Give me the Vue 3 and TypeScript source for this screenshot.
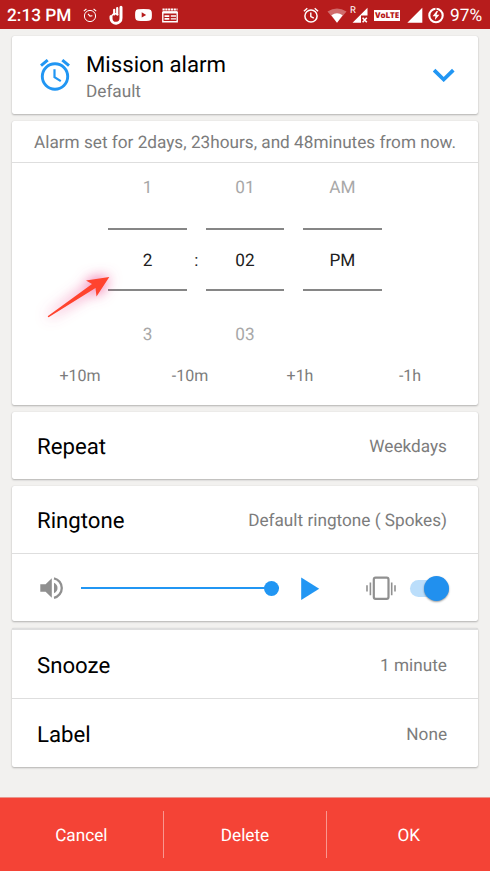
<script setup lang="ts">
interface PickerColumn {
  previous: string
  current: string
  next: string
}

const hours: PickerColumn = { previous: '1', current: '2', next: '3' }
const minutes: PickerColumn = { previous: '01', current: '02', next: '03' }
const period: PickerColumn = { previous: 'AM', current: 'PM', next: '' }
const columns: PickerColumn[] = [hours, minutes, period]
const adjustments: string[] = ['+10m', '-10m', '+1h', '-1h']
const actions: string[] = ['Cancel', 'Delete', 'OK']
</script>

<template>
  <div class="screen">
    <header class="status">
      <span class="clock">2:13 PM</span>
      <svg class="s-alarm-small" width="14" height="15" viewBox="0 0 14 15" fill="none" stroke="#fff">
        <circle cx="7" cy="8" r="5.6" stroke-width="1" />
        <path d="M.8 3.2 3.4 1M13.2 3.2 10.6 1M5 5.8l2 2.3 2.4-.3" stroke-width="1.1" />
      </svg>
      <svg class="s-hand" width="15" height="20" viewBox="0 0 15 20" fill="none" stroke="#fff" stroke-linecap="round">
        <path d="M12 2.2V13a5 5 0 0 1-10 .5V11.6" stroke-width="3" />
        <path d="M5.200 4.800V9.500M8.200 3.200v6.300" stroke-width="2.200" />
        <path d="M3 10.400c1.200-2 4.400-2.200 5.800-.6" stroke-width="1.400" />
      </svg>
      <svg class="s-video" width="17" height="12" viewBox="0 0 17 12">
        <path d="M3 .3Q8.5-.2 14 .3 16.4.5 16.7 2.8 17.1 6 16.7 9.2 16.4 11.5 14 11.7 8.500 12.200 3 11.700.600 11.500.300 9.200-.100 6 .300 2.800.600.500 3 .300Z" fill="#fff" />
        <path d="M6.700 3.300v5.200l4.500-2.600Z" fill="#b71c1c" />
      </svg>
      <svg class="s-news" width="16" height="15" viewBox="0 0 16 15" fill="none" stroke="#fff">
        <path d="M.500 1.500h15" stroke-width="1.800" stroke-dasharray="2.200 .600" />
        <path d="M.800 4v9.800h14.400V4" stroke-width="1.400" />
        <path d="M.500 4.300h15" stroke-width="2.400" />
        <path d="M8.800 8H14M8.800 10.800H14" stroke-width="1.300" />
        <path d="M2.500 8.100h4.800M2.500 10.800h4.800" stroke-width="1.700" />
      </svg>
      <span class="spacer"></span>
      <svg class="s-alarm" width="16" height="17" viewBox="0 0 16 17" fill="none" stroke="#fff">
        <circle cx="8" cy="9" r="6.100" stroke-width="1.500" />
        <path d="M.900 4.200 4.300 1.200M15.100 4.200 11.700 1.200M7.800 5.500v4l3 1.700" stroke-width="1.400" />
      </svg>
      <svg class="s-wifi" width="20" height="15" viewBox="0 0 20 15" fill="#fff">
        <path d="M.500 3.600Q10-2.600 19.500 3.600L10 14.800Z" opacity=".35" />
        <path d="M4.400 7.300Q10 3.400 15.600 7.300L10 14.800Z" />
      </svg>
      <span class="roaming">
        <svg width="16" height="16" viewBox="0 0 16 16">
          <path d="M.500 15.700 15.500.700V8.500H9v7.200Z" fill="#fff" />
          <path d="m10.600 10.700 4.200 4.500M14.800 10.700l-4.200 4.500" stroke="#fff" stroke-width="1.600" />
        </svg>
        <span class="r-mark">R</span>
      </span>
      <span class="volte">VoLTE</span>
      <svg class="s-signal" width="16" height="16" viewBox="0 0 16 16">
        <path d="M.300 15.700 15.300.700v15Z" fill="#fff" />
      </svg>
      <svg class="s-battery" width="16" height="17" viewBox="0 0 16 17">
        <circle cx="8" cy="8.500" r="6.700" fill="none" stroke="#fff" stroke-width="2.100" />
        <path d="M8 0v3" stroke="#b71c1c" stroke-width="1" />
        <path d="M8.600 4 4.600 9.200h2.800L6.900 13l4.500-5.300H8.500L10 4Z" fill="#fff" />
      </svg>
      <span class="percent">97%</span>
    </header>

    <main class="cards">
      <section class="card mission">
        <svg width="32" height="32" viewBox="0 0 32 32" fill="none" stroke="#2196f3">
          <circle cx="16" cy="17.500" r="12.700" stroke-width="2.900" />
          <path d="M2 6.700 8.700 1.100M30 6.700 23.300 1.100" stroke-width="3" />
          <path d="M15.500 10.300v7.800l6.300 4" stroke-width="2.200" />
        </svg>
        <div class="mission-text">
          <div class="title">Mission alarm</div>
          <div class="value">Default</div>
        </div>
        <svg width="22" height="14" viewBox="0 0 22 14" fill="none" stroke="#2196f3" stroke-width="3.700">
          <path d="m1.100 2.200 9.600 9.300 9.600-9.300" />
        </svg>
      </section>

      <section class="card time">
        <div class="summary">Alarm set for 2days, 23hours, and 48minutes from now.</div>
        <div class="picker">
          <template v-for="(column, index) in columns" :key="index">
            <div class="column">
              <span class="faded">{{ column.previous }}</span>
              <span class="current">{{ column.current }}</span>
              <span class="faded">{{ column.next }}</span>
            </div>
            <span v-if="index < 2" class="separator">{{ index === 0 ? ':' : '' }}</span>
          </template>
        </div>
        <div class="adjust">
          <span v-for="step in adjustments" :key="step">{{ step }}</span>
        </div>
        <svg class="pointer" width="100" height="80" viewBox="0 0 100 80">
          <path d="M80.300 19 57 22.500 63 26 19 58Q18.300 59.500 20 59L66.500 30 67.500 38.500Z" fill="#ff432e" />
        </svg>
      </section>

      <section class="card repeat">
        <div class="row">
          <span class="title">Repeat</span><span class="value">Weekdays</span>
        </div>
      </section>

      <section class="card ringtone">
        <div class="row">
          <span class="title">Ringtone</span><span class="value">Default ringtone ( Spokes)</span>
        </div>
        <div class="volume">
          <svg width="24" height="22" viewBox="0 0 24 22" fill="#909090">
            <path d="M.300 7.300h5.300L11.800 1.200v19.500L5.600 14.700H.300Z" />
            <path d="M14 5.800q3.500 1.700 3.500 5.300T14 16.300Z" />
            <path d="M14 1.300a10 10 0 0 1 0 19.500" fill="none" stroke="#909090" stroke-width="2.300" />
          </svg>
          <div class="slider"><span class="thumb"></span></div>
          <svg class="play" width="19" height="23" viewBox="0 0 19 23" fill="#2196f3"><path d="M.200.400v22.500L18.200 11.700Z" /></svg>
          <svg class="vibrate" width="30" height="24" viewBox="0 0 30 24" fill="none" stroke="#909090">
            <rect x="7.800" y="1.700" width="14.700" height="21.200" rx="1.800" stroke-width="2.200" />
            <path d="M1 9.200v6.300M4.400 6.400v12.900M25.700 6.400v12.900M29 9.200v6.300" stroke-width="1.600" />
          </svg>
          <div class="toggle"><span class="knob"></span></div>
        </div>
      </section>

      <section class="card extras">
        <div class="row">
          <span class="title">Snooze</span><span class="value">1 minute</span>
        </div>
        <div class="row label">
          <span class="title">Label</span><span class="value">None</span>
        </div>
      </section>
    </main>

    <footer class="actions">
      <button v-for="action in actions" :key="action" type="button"><span>{{ action }}</span></button>
    </footer>
  </div>
</template>

<style>
body {
  background: #f2f1ef;
}
</style>

<style scoped>
.screen {
  box-sizing: border-box;
  display: flex;
  flex-direction: column;
  width: 490px;
  height: 871px;
  overflow: hidden;
  background: #f2f1ef;
  color: #000;
  font-family: Roboto, sans-serif;
  text-rendering: geometricPrecision;
}
svg {
  display: block;
  flex: none;
}
.status {
  display: flex;
  align-items: center;
  box-sizing: border-box;
  height: 29px;
  padding: 1px 7px 0 7px;
  background: #b71c1c;
  color: #fff;
  flex: none;
}
.clock {
  width: 76px;
  padding-top: 2px;
  font-size: 17.300px;
  font-weight: 500;
  white-space: nowrap;
}
.s-hand {
  margin-left: 12px;
}
.s-video {
  margin-left: 11px;
}
.s-news {
  margin-left: 10px;
}
.spacer {
  flex: 1;
}
.s-wifi {
  margin-left: 8px;
}
.roaming {
  position: relative;
  margin-left: 5px;
}
.r-mark {
  position: absolute;
  left: -2px;
  top: -1px;
  font-size: 9.500px;
  line-height: 10px;
}
.volte {
  box-sizing: border-box;
  width: 26px;
  height: 11px;
  margin-left: 6px;
  background: #fff;
  color: #b71c1c;
  font: 800 8px/11px "Open Sans", sans-serif;
  letter-spacing: -0.1px;
  text-align: center;
}
.s-signal {
  margin-left: 7px;
}
.s-battery {
  margin-left: 5px;
}
.percent {
  width: 33px;
  margin-left: 6px;
  padding-top: 2px;
  font-size: 17.300px;
  white-space: nowrap;
}
.cards {
  display: flex;
  flex-direction: column;
  flex: 1;
  gap: 7px;
  padding: 7px 12px 0;
}
.card {
  box-sizing: border-box;
  position: relative;
  flex: none;
  border-radius: 2px;
  background: #fff;
  box-shadow: 0 1px 2px rgba(0, 0, 0, 0.25), 0 0 1px rgba(0, 0, 0, 0.15);
}
.title {
  font-size: 22.200px;
  line-height: 28px;
}
.value {
  color: #7c7c7c;
  font-size: 17.200px;
  line-height: 24px;
}
.mission {
  display: flex;
  align-items: center;
  height: 78px;
  padding: 0 23px 0 27px;
}
.mission-text {
  flex: 1;
  margin-left: 15px;
  padding-top: 4px;
}
.mission-text .value {
  line-height: 26px;
  margin-bottom: -2px;
}
.time {
  height: 284px;
}
.summary {
  box-sizing: border-box;
  height: 42px;
  padding-top: 1px;
  border-bottom: 1px solid #dedede;
  color: #7c7c7c;
  font-size: 17.200px;
  line-height: 42px;
  text-align: center;
  white-space: nowrap;
}
.picker {
  display: flex;
  justify-content: center;
  height: 195px;
}
.column {
  display: grid;
  grid-template-rows: 65px 63px 66px;
  width: 78.400px;
  text-align: center;
  font-size: 17.200px;
}
.faded {
  color: #a8a8a8;
}
.faded:first-child {
  line-height: 50px;
}
.faded:last-child {
  line-height: 88px;
}
.current {
  box-sizing: border-box;
  border-top: 2px solid #868686;
  border-bottom: 2px solid #868686;
  color: #212121;
  line-height: 62px;
}
.separator {
  width: 19px;
  padding-top: 67px;
  color: #212121;
  font-size: 17px;
  line-height: 62px;
  text-align: center;
}
.adjust {
  display: grid;
  grid-template-columns: repeat(4, 1fr);
  padding: 0 13px;
  color: #7c7c7c;
  font-size: 16px;
  line-height: 36px;
  text-align: center;
}
.pointer {
  position: absolute;
  left: 17px;
  top: 137px;
  overflow: visible;
  filter: drop-shadow(0 0 7px rgba(233, 30, 120, 0.85));
}
.repeat {
  height: 67px;
}
.row {
  box-sizing: border-box;
  display: flex;
  align-items: center;
  justify-content: space-between;
  height: 67px;
  padding: 3px 31px 0 25px;
}
.ringtone {
  height: 135px;
}
.volume {
  box-sizing: border-box;
  display: flex;
  align-items: center;
  height: 68px;
  padding: 1px 29px 0 28px;
  border-top: 1px solid #dedede;
}
.slider {
  display: flex;
  align-items: center;
  justify-content: flex-end;
  width: 198px;
  height: 2px;
  margin-left: 17px;
  background: #2196f3;
}
.thumb {
  width: 15px;
  height: 15px;
  border-radius: 50%;
  background: #2196f3;
}
.play {
  margin-left: 22px;
}
.vibrate {
  margin-left: auto;
}
.toggle {
  display: flex;
  align-items: center;
  justify-content: flex-end;
  width: 39px;
  height: 17px;
  margin-left: 14px;
  border-radius: 9px;
  background: #bbdefb;
}
.knob {
  width: 25px;
  height: 25px;
  border-radius: 50%;
  background: #2190ee;
  box-shadow: 0 1px 2px rgba(0, 0, 0, 0.4);
}
.extras {
  height: 139px;
  border-top: 2px solid #dedede;
}
.extras .row {
  height: 68px;
  padding-top: 4px;
}
.extras .label {
  height: 69px;
  border-top: 1px solid #dedede;
}
.actions {
  display: flex;
  align-items: center;
  height: 73px;
  border-top: 1px solid #e9968d;
  background: #f44336;
  flex: none;
}
.actions button {
  box-sizing: border-box;
  flex: 1;
  height: 47px;
  padding: 0;
  border: 0;
  border-left: 1px solid rgba(255, 255, 255, 0.45);
  background: none;
  color: #fff;
  font: 17.200px/20px Roboto, sans-serif;
  text-rendering: geometricPrecision;
}
.actions button:first-child {
  border-left: 0;
}
.actions span {
  display: block;
  padding-top: 2px;
}
</style>
